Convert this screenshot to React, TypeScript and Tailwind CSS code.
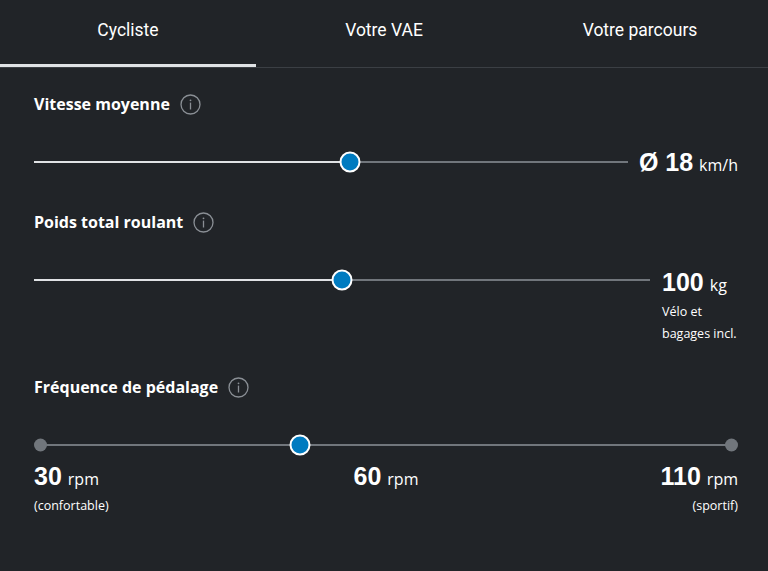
import React from "react";

const font = { fontFamily: '"Open Sans", "Liberation Sans", Arial, sans-serif' };
const tabFont = { fontFamily: 'Roboto, "Liberation Sans", sans-serif' };
const numFont = { fontFamily: '"Liberation Sans", Arial, sans-serif' };

function InfoIcon() {
  return (
    <svg width="21" height="21" viewBox="0 0 21 21" fill="none">
      <circle cx="10.5" cy="10.5" r="9.5" stroke="#8a8f95" strokeWidth="1.3" />
      <circle cx="10.5" cy="6.3" r="0.9" fill="#8a8f95" />
      <line x1="10.5" y1="8.6" x2="10.5" y2="15.5" stroke="#8a8f95" strokeWidth="1.3" />
    </svg>
  );
}

function Title({ children }: { children: React.ReactNode }) {
  return (
    <div className="flex h-[20px] items-center gap-[10px]">
      <span className="text-[16px] font-bold leading-[20px] text-white">{children}</span>
      <InfoIcon />
    </div>
  );
}

function Thumb({ pos }: { pos: number }) {
  return (
    <div
      className="absolute top-1/2 h-[21px] w-[21px] -translate-x-1/2 -translate-y-1/2 rounded-full border-2 border-white bg-[#007bc0]"
      style={{ left: `${pos * 100}%` }}
    />
  );
}

function FillSlider({ pos }: { pos: number }) {
  return (
    <div className="relative h-[24px] flex-1">
      <div className="absolute left-0 right-0 top-1/2 h-[2px] -translate-y-1/2 bg-[#71767c]" />
      <div
        className="absolute left-0 top-1/2 h-[2px] -translate-y-1/2 bg-[#e0e2e5]"
        style={{ width: `${pos * 100}%` }}
      />
      <Thumb pos={pos} />
    </div>
  );
}

function Value({ num, unit }: { num: string; unit: string }) {
  return (
    <div className="flex h-[28px] items-baseline gap-[6px] leading-[28px]">
      <span className="text-[25px] font-bold" style={numFont}>{num}</span>
      <span className="text-[16px]">{unit}</span>
    </div>
  );
}

export default function App() {
  return (
    <div className="h-[571px] w-full bg-[#212428] text-white" style={font}>
      <div className="grid h-[68px] grid-cols-3 border-b border-[#3b3f44]" style={tabFont}>
        <div className="flex flex-col">
          <div className="flex flex-1 items-start justify-center pt-[18px] text-[17.5px] leading-[24px]">
            Cycliste
          </div>
          <div className="h-[3px] bg-[#e0e2e5]" />
        </div>
        <div className="flex items-start justify-center pt-[18px] text-[17.5px] leading-[24px]">
          Votre VAE
        </div>
        <div className="flex items-start justify-center pt-[18px] text-[17.5px] leading-[24px]">
          Votre parcours
        </div>
      </div>

      <div className="flex flex-col pl-[34px] pr-[30px]">
        {/* Section 1 */}
        <div className="mt-[26px]">
          <Title>Vitesse moyenne</Title>
        </div>
        <div className="mt-[34px] flex items-center gap-[11px]">
          <FillSlider pos={0.532} />
          <Value num="Ø 18" unit="km/h" />
        </div>

        {/* Section 2 */}
        <div className="mt-[36px]">
          <Title>Poids total roulant</Title>
        </div>
        <div className="mt-[36px] flex items-start gap-[12px]">
          <FillSlider pos={0.5} />
          <div className="flex w-[76px] flex-col">
            <Value num="100" unit="kg" />
            <div className="pt-[5px] text-[12.5px] leading-[22px]">
              <div>Vélo et</div>
              <div>bagages incl.</div>
            </div>
          </div>
        </div>

        {/* Section 3 */}
        <div className="mt-[32px]">
          <Title>Fréquence de pédalage</Title>
        </div>
        <div className="relative mt-[36px] h-[24px]">
          <div className="absolute left-[6px] right-[6px] top-1/2 h-[2px] -translate-y-1/2 bg-[#71767c]" />
          <div className="absolute left-0 top-1/2 h-[13px] w-[13px] -translate-y-1/2 rounded-full bg-[#71767c]" />
          <div className="absolute right-0 top-1/2 h-[13px] w-[13px] -translate-y-1/2 rounded-full bg-[#71767c]" />
          <div className="absolute left-[6px] right-[6px] top-0 h-full">
            <Thumb pos={0.375} />
          </div>
        </div>
        <div className="mt-[5px] grid grid-cols-3">
          <div className="flex flex-col items-start">
            <Value num="30" unit="rpm" />
            <div className="pt-[5px] text-[12.5px] leading-[22px]">(confortable)</div>
          </div>
          <div className="flex flex-col items-center">
            <Value num="60" unit="rpm" />
          </div>
          <div className="flex flex-col items-end">
            <Value num="110" unit="rpm" />
            <div className="pt-[5px] text-[12.5px] leading-[22px]">(sportif)</div>
          </div>
        </div>
      </div>
    </div>
  );
}
